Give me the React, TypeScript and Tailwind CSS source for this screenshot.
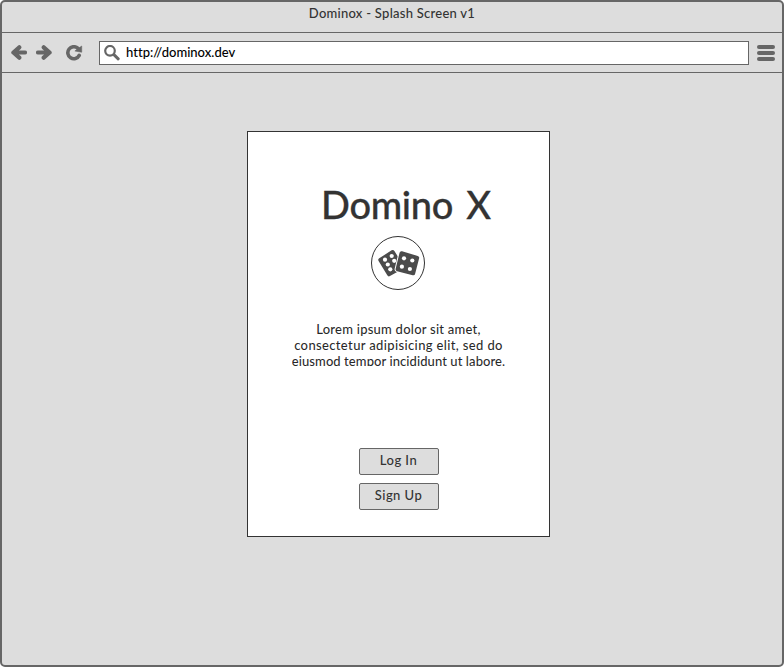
import type { ReactNode } from "react";

function BackArrow() {
  return (
    <svg width="16" height="16" viewBox="0 0 16 16" fill="none" stroke="#666" strokeWidth="4.2" strokeLinecap="round" strokeLinejoin="round">
      <path d="M3 7.5h11M8.3 2.3 2.4 7.5l5.9 5.2" />
    </svg>
  );
}

function ForwardArrow() {
  return (
    <svg width="16" height="16" viewBox="0 0 16 16" fill="none" stroke="#666" strokeWidth="4.2" strokeLinecap="round" strokeLinejoin="round">
      <path d="M2 7.5h11M7.7 2.3l5.9 5.2-5.9 5.2" />
    </svg>
  );
}

function Reload() {
  return (
    <svg width="17" height="16" viewBox="0 0 17 16">
      <path d="M12 3.4A6 6 0 1 0 13.2 10.4" fill="none" stroke="#666" strokeWidth="3.6" strokeLinecap="round" />
      <path d="M15.7 1v6.2L8.9 6z" fill="#666" stroke="#666" strokeWidth="0.6" strokeLinejoin="round" />
    </svg>
  );
}

function Magnifier() {
  return (
    <svg width="16" height="16" viewBox="0 0 16 16" fill="none" stroke="#666" strokeLinecap="round">
      <circle cx="6" cy="5.8" r="4.8" strokeWidth="2.2" />
      <path d="m10.4 10.2 3.8 3.6" strokeWidth="3" />
    </svg>
  );
}

function DiceLogo() {
  return (
    <svg className="relative -left-px" width="54" height="54" viewBox="0 0 54 54">
      <circle cx="27" cy="27" r="26.5" fill="#fff" stroke="#333" />
      <path d="M9.3 24 21.7 16 31 31 18 38.3z" fill="#4b4b4b" stroke="#4b4b4b" strokeWidth="4" strokeLinejoin="round" />
      <g fill="#fff">
        <circle cx="14" cy="23.7" r="2.1" />
        <circle cx="20.7" cy="20" r="2.1" />
        <circle cx="23.2" cy="24.8" r="2.1" />
        <circle cx="16.8" cy="28.5" r="2.1" />
        <circle cx="19.3" cy="33.3" r="2.1" />
      </g>
      <path d="M30.5 17.2 46.2 21.8 42.2 37.3 26.6 33.2z" fill="#fff" stroke="#fff" strokeWidth="6" strokeLinejoin="round" />
      <path d="M30.5 17.2 46.2 21.8 42.2 37.3 26.6 33.2z" fill="#4b4b4b" stroke="#4b4b4b" strokeWidth="4" strokeLinejoin="round" />
      <g fill="#fff">
        <circle cx="33" cy="22.3" r="2.1" />
        <circle cx="41.3" cy="24.5" r="2.1" />
        <circle cx="30.9" cy="30.7" r="2.1" />
        <circle cx="38.9" cy="33" r="2.1" />
      </g>
    </svg>
  );
}

function Button({ children }: { children: ReactNode }) {
  return (
    <button className="block h-[27px] w-20 rounded-[2px] border border-[#666] bg-[#ddd] pb-0.5 text-center leading-[23px]">
      {children}
    </button>
  );
}

export default function App() {
  return (
    <div className="h-[667px] w-[784px] bg-white font-['Lato',sans-serif] text-[13px] font-medium text-[#333]">
      <div className="flex h-full flex-col rounded-[5px] border-2 border-[#666] bg-[#ddd]">
        <header className="h-[31px] shrink-0 border-b border-[#666] text-center leading-[23px]">
          <span className="tracking-[0.26px]">Dominox - Splash Screen v1</span>
        </header>
        <nav className="flex h-10 shrink-0 items-center border-b border-[#666] pl-[9px] pr-[7px]">
          <BackArrow />
          <span className="ml-[9px]"><ForwardArrow /></span>
          <span className="ml-[14px]"><Reload /></span>
          <div className="ml-4 flex h-6 w-[650px] shrink-0 items-center border border-[#666] bg-white pl-1">
            <Magnifier />
            <span className="ml-[6px] mt-px tracking-[0.02px] text-black">http://dominox.dev</span>
          </div>
          <div className="ml-2 flex w-[18px] shrink-0 flex-col gap-[2px]">
            <i className="h-1 rounded-full bg-[#666]" />
            <i className="h-1 rounded-full bg-[#666]" />
            <i className="h-1 rounded-full bg-[#666]" />
          </div>
        </nav>
        <main className="flex flex-1 flex-col pl-[245px] pt-[58px]">
          <section className="flex h-[406px] w-[303px] flex-col items-center border border-[#333] bg-white">
            <h1 className="ml-[15px] mt-[48px] h-14 whitespace-nowrap text-[38px] leading-[48px] tracking-[-0.3px] [-webkit-text-stroke:0.3px_#333] [word-spacing:4px]">Domino X</h1>
            <DiceLogo />
            <div className="mt-[31px] h-[45px] overflow-hidden whitespace-nowrap text-center leading-4 text-black/85">
              <p className="tracking-[0.24px]">Lorem ipsum dolor sit amet,</p>
              <p className="tracking-[0.36px]">consectetur adipisicing elit, sed do</p>
              <p className="tracking-[0.08px]">eiusmod tempor incididunt ut labore.</p>
            </div>
            <div className="mt-[82px] flex flex-col gap-2">
              <Button><span className="tracking-[0.45px]">Log In</span></Button>
              <Button><span className="tracking-[0.45px]">Sign Up</span></Button>
            </div>
          </section>
        </main>
      </div>
    </div>
  );
}
